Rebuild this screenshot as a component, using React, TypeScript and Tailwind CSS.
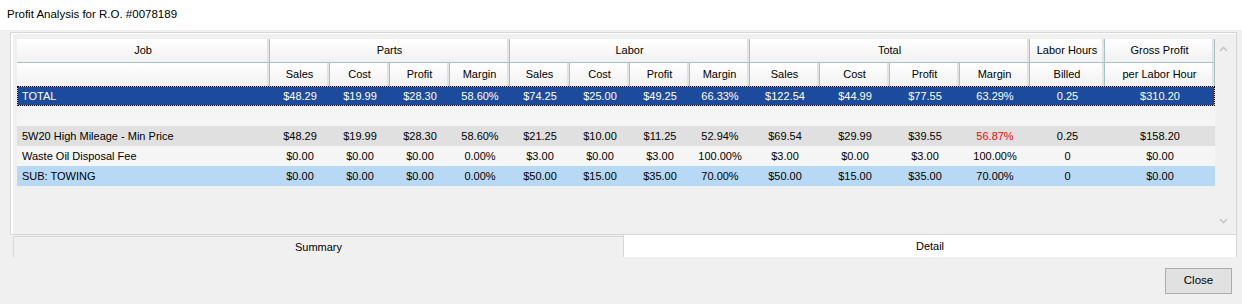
const COLS = 'grid grid-cols-[253px_repeat(8,60px)_repeat(4,70px)_75px_110px]';

type RowData = { job: string; cells: string[]; red?: number };

const rows: RowData[] = [
  {
    job: '5W20 High Mileage - Min Price',
    cells: ['$48.29', '$19.99', '$28.30', '58.60%', '$21.25', '$10.00', '$11.25', '52.94%', '$69.54', '$29.99', '$39.55', '56.87%', '0.25', '$158.20'],
    red: 11,
  },
  {
    job: 'Waste Oil Disposal Fee',
    cells: ['$0.00', '$0.00', '$0.00', '0.00%', '$3.00', '$0.00', '$3.00', '100.00%', '$3.00', '$0.00', '$3.00', '100.00%', '0', '$0.00'],
  },
  {
    job: 'SUB: TOWING',
    cells: ['$0.00', '$0.00', '$0.00', '0.00%', '$50.00', '$15.00', '$35.00', '70.00%', '$50.00', '$15.00', '$35.00', '70.00%', '0', '$0.00'],
  },
];

const total = ['$48.29', '$19.99', '$28.30', '58.60%', '$74.25', '$25.00', '$49.25', '66.33%', '$122.54', '$44.99', '$77.55', '63.29%', '0.25', '$310.20'];

const sub = ['Sales', 'Cost', 'Profit', 'Margin'];

const Head = ({ children, span, bottom }: { children?: React.ReactNode; span?: string; bottom?: boolean }) => (
  <div
    className={`flex items-center justify-center bg-linear-to-b from-white to-[#f1f1f1] border-r border-[#a9c3c3] shadow-[inset_-2px_0_0_#e3e3e3] ${
      bottom ? 'border-b h-[24px]' : 'h-[23px]'
    } ${span ?? ''}`}
  >
    {children}
  </div>
);

const Chevron = ({ up }: { up?: boolean }) => (
  <svg width="9" height="6" viewBox="0 0 9 6">
    <polyline
      points={up ? '1,5 4.5,1.5 8,5' : '1,1 4.5,4.5 8,1'}
      fill="none"
      stroke="#c6c6c6"
      strokeWidth="1.6"
    />
  </svg>
);

export default function App() {
  return (
    <div className="w-[1242px] h-[304px] bg-[#f0f0f0] flex flex-col font-['Liberation_Sans',Arial,sans-serif] text-[11px] text-black overflow-hidden">
      <div className="h-[30px] bg-white flex items-center pl-[7px] pb-[1px] text-[11.5px]">
        Profit Analysis for R.O. #0078189
      </div>

      <div className="ml-[10px] mt-[2px] w-[1227px] h-[203px] border border-[#d6d6d6]">
        <div className="h-full border-l-2 border-t border-white pl-[4px] pt-[5px]">
          <div className="flex h-[190px] w-[1215px]">
            <div className="w-[1198px] flex flex-col">
              <div className={COLS}>
                <Head bottom>Job</Head>
                <Head bottom span="col-span-4">Parts</Head>
                <Head bottom span="col-span-4">Labor</Head>
                <Head bottom span="col-span-4">Total</Head>
                <Head bottom>Labor Hours</Head>
                <Head bottom>Gross Profit</Head>
                <Head />
                {[0, 1, 2].flatMap((g) => sub.map((s) => <Head key={`${g}${s}`}>{s}</Head>))}
                <Head>Billed</Head>
                <Head>per Labor Hour</Head>
              </div>

              <div className={`${COLS} h-[20px] bg-[#1c4a9c] text-white shadow-[inset_0_0_0_1px_#d9c56a] outline-1 outline-dotted outline-black -outline-offset-1`}>
                <div className="pl-[5px] flex items-center">TOTAL</div>
                {total.map((c, i) => (
                  <div key={i} className="flex items-center justify-center">
                    {c}
                  </div>
                ))}
              </div>

              <div className="h-[20px] bg-[#f5f5f5]" />

              {rows.map((r, ri) => (
                <div
                  key={r.job}
                  className={`${COLS} h-[20px] ${ri === 0 ? 'bg-[#e0e0e0]' : ri === 1 ? 'bg-[#f5f5f5]' : 'bg-[#b8d9f5]'}`}
                >
                  <div className="pl-[5px] flex items-center">{r.job}</div>
                  {r.cells.map((c, i) => (
                    <div key={i} className={`flex items-center justify-center ${r.red === i ? 'text-[#ff0000]' : ''}`}>
                      {c}
                    </div>
                  ))}
                </div>
              ))}
            </div>

            <div className="w-[17px] flex flex-col items-center justify-between pt-[7px] pb-[5px]">
              <Chevron up />
              <Chevron />
            </div>
          </div>
        </div>
      </div>

      <div className="flex ml-[13px]">
        <div className="w-[610px] h-[21px] mt-[1px] border-l border-t border-[#d6d6d6] flex items-center justify-center">
          Summary
        </div>
        <div className="w-[614px] h-[22px] bg-white border-l border-r border-[#d6d6d6] flex items-center justify-center">
          Detail
        </div>
      </div>

      <div className="flex justify-end pr-[10px] mt-[11px]">
        <button className="w-[67px] h-[26px] bg-[#e1e1e1] border border-[#adadad] text-[11.5px] flex items-center justify-center">
          Close
        </button>
      </div>
    </div>
  );
}
